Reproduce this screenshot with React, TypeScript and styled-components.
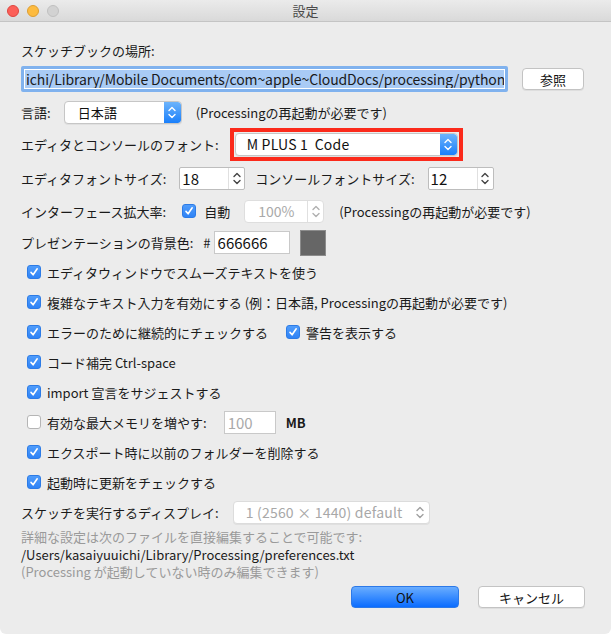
import React from "react";
import styled, { createGlobalStyle, css } from "styled-components";

const Global = createGlobalStyle`
  html, body { margin: 0; padding: 0; background: #ffffff; }
  body { font-family: "Noto Sans CJK JP", "Noto Sans", sans-serif; font-size: 13px; color: #1a1a1a; }
  * { box-sizing: border-box; }
`;

const Window = styled.div`
  width: 611px;
  height: 634px;
  background: #ececec;
  border-radius: 0 0 6px 6px;
  overflow: hidden;
  display: flex;
  flex-direction: column;
`;

const TitleBar = styled.div`
  height: 22px;
  flex: none;
  background: linear-gradient(#ebebeb, #d9d9d9);
  border-bottom: 1px solid #c4c4c4;
  display: flex;
  align-items: center;
  position: relative;
  padding-left: 7px;
  gap: 8px;
`;

const Light = styled.span<{ $c: string; $b: string }>`
  width: 12px;
  height: 12px;
  border-radius: 50%;
  background: ${(p) => p.$c};
  border: 0.5px solid ${(p) => p.$b};
`;

const Title = styled.div`
  position: absolute;
  left: 0;
  right: 0;
  top: 0;
  bottom: 0;
  display: flex;
  align-items: center;
  justify-content: center;
  font-size: 13px;
  color: #4a4a4a;
  pointer-events: none;
`;

const Body = styled.div`
  padding: 18px 26px 0 21px;
  display: flex;
  flex-direction: column;
`;

const Row = styled.div<{ $h: number; $indent?: number }>`
  height: ${(p) => p.$h}px;
  display: flex;
  align-items: center;
  padding-left: ${(p) => p.$indent ?? 0}px;
  white-space: nowrap;
`;

const Label = styled.span<{ $ml?: number; $muted?: boolean; $bold?: boolean }>`
  margin-left: ${(p) => p.$ml ?? 0}px;
  color: ${(p) => (p.$muted ? "#9a9a9a" : "#1a1a1a")};
  font-weight: ${(p) => (p.$bold ? 600 : 400)};
  flex: none;
`;

const PathField = styled.div`
  width: 487px;
  flex: none;
  height: 26px;
  border: 3px solid #80b2ee;
  border-radius: 2px;
  background: #ffffff;
  padding: 1px;
  margin-right: 14px;
`;

const PathSel = styled.div`
  height: 100%;
  background: #a9cbf5;
  font-size: 14px;
  line-height: 18px;
  padding-left: 1px;
  overflow: hidden;
  white-space: nowrap;
  letter-spacing: -0.12px;
`;

const PushButton = styled.div<{ $w: number; $primary?: boolean; $ml?: number }>`
  width: ${(p) => p.$w}px;
  flex: none;
  height: 22px;
  margin-left: ${(p) => p.$ml ?? 0}px;
  border-radius: 4px;
  display: flex;
  align-items: center;
  justify-content: center;
  font-size: 13px;
  color: #111;
  ${(p) =>
    p.$primary
      ? css`
          background: linear-gradient(#69adff, #0a6cff);
          border: 1px solid #2c79e8;
        `
      : css`
          background: #ffffff;
          border: 1px solid #c3c3c3;
          box-shadow: 0 1px 0 rgba(0, 0, 0, 0.06);
        `}
`;

const Select = styled.div<{ $w: number; $ml?: number; $disabled?: boolean }>`
  width: ${(p) => p.$w}px;
  flex: none;
  height: 23px;
  margin-left: ${(p) => p.$ml ?? 0}px;
  background: #ffffff;
  border: 1px solid ${(p) => (p.$disabled ? "#dcdcdc" : "#c6c6c6")};
  border-radius: 4px;
  display: flex;
  align-items: center;
  overflow: hidden;
  color: ${(p) => (p.$disabled ? "#a8a8a8" : "#111")};
  box-shadow: 0 1px 0 rgba(0, 0, 0, 0.05);
`;

const SelectText = styled.span<{ $pl: number; $size?: number }>`
  flex: 1;
  padding-left: ${(p) => p.$pl}px;
  font-size: ${(p) => p.$size ?? 13}px;
  letter-spacing: 0.2px;
`;

const BlueArrow = styled.div`
  width: 17px;
  height: 100%;
  background: linear-gradient(#6db4fb, #1a7ffb);
  display: flex;
  align-items: center;
  justify-content: center;
  border-radius: 0 3px 3px 0;
`;

const PlainArrow = styled.div`
  width: 18px;
  height: 100%;
  display: flex;
  align-items: center;
  justify-content: center;
`;

const Highlight = styled.div`
  margin-left: 11px;
  border: 4px solid #fb2a1b;
  padding: 1px;
  display: flex;
  flex: none;
`;

const Spinner = styled.div<{ $w: number; $ml?: number; $disabled?: boolean }>`
  width: ${(p) => p.$w}px;
  flex: none;
  height: 23px;
  margin-left: ${(p) => p.$ml ?? 0}px;
  background: #ffffff;
  border: 1px solid ${(p) => (p.$disabled ? "#dedede" : "#bdbdbd")};
  border-radius: ${(p) => (p.$disabled ? 4 : 2)}px;
  display: flex;
  align-items: center;
  color: ${(p) => (p.$disabled ? "#a9a9a9" : "#111")};
`;

const SpinText = styled.span<{ $pl: number; $size?: number }>`
  flex: 1;
  padding-left: ${(p) => p.$pl}px;
  font-size: ${(p) => p.$size ?? 15}px;
`;

const SpinArrows = styled.div`
  width: 16px;
  height: 21px;
  border-left: 1px solid #e0e0e0;
  display: flex;
  align-items: center;
  justify-content: center;
`;

const Box = styled.span<{ $checked: boolean; $ml?: number }>`
  width: 14px;
  height: 14px;
  flex: none;
  margin-left: ${(p) => p.$ml ?? 0}px;
  border-radius: 3px;
  display: inline-flex;
  align-items: center;
  justify-content: center;
  ${(p) =>
    p.$checked
      ? css`
          background: linear-gradient(#4f9cfb, #2f83f6);
          border: 1px solid #2c7be6;
        `
      : css`
          background: #ffffff;
          border: 1px solid #b5b5b5;
        `}
`;

const TextField = styled.div<{ $w: number; $ml?: number; $muted?: boolean }>`
  width: ${(p) => p.$w}px;
  flex: none;
  height: 23px;
  margin-left: ${(p) => p.$ml ?? 0}px;
  background: #ffffff;
  border: 1px solid #c9c9c9;
  display: flex;
  align-items: center;
  padding-left: 3px;
  font-size: 15px;
  color: ${(p) => (p.$muted ? "#a9a9a9" : "#111")};
`;

const Swatch = styled.div`
  width: 26px;
  height: 26px;
  flex: none;
  margin-left: 10px;
  background: #666666;
  border: 1px solid #8c8c8c;
`;

const InfoBlock = styled.div`
  margin-top: 1px;
  display: flex;
  flex-direction: column;
  line-height: 17.5px;
  white-space: nowrap;
`;

const Buttons = styled.div`
  margin-top: 5.5px;
  display: flex;
  justify-content: flex-end;
  gap: 19px;
`;

const Chevrons = ({ color }: { color: string }) => (
  <svg width="8" height="13" viewBox="0 0 8 13">
    <path d="M1 4.5 L4 1.5 L7 4.5" fill="none" stroke={color} strokeWidth="1.4" strokeLinecap="round" strokeLinejoin="round" />
    <path d="M1 8.5 L4 11.5 L7 8.5" fill="none" stroke={color} strokeWidth="1.4" strokeLinecap="round" strokeLinejoin="round" />
  </svg>
);

const Check = () => (
  <svg width="10" height="10" viewBox="0 0 10 10">
    <path d="M2 5.4 L4.1 7.8 L8.2 1.8" fill="none" stroke="#fff" strokeWidth="1.6" strokeLinecap="round" strokeLinejoin="round" />
  </svg>
);

const CheckRow = ({ checked, children }: { checked: boolean; children: React.ReactNode }) => (
  <Row $h={30} $indent={6}>
    <Box $checked={checked}>{checked && <Check />}</Box>
    {children}
  </Row>
);

export default function App() {
  return (
    <>
      <Global />
      <Window>
        <TitleBar>
          <Light $c="#fc5f58" $b="#de4640" />
          <Light $c="#fdbb3f" $b="#dd9e32" />
          <Light $c="#d2d2d2" $b="#c0c0c0" />
          <Title>設定</Title>
        </TitleBar>
        <Body>
          <Row $h={20}>
            <Label>スケッチブックの場所:</Label>
          </Row>
          <Row $h={38}>
            <PathField>
              <PathSel>ichi/Library/Mobile Documents/com~apple~CloudDocs/processing/python</PathSel>
            </PathField>
            <PushButton $w={62}>参照</PushButton>
          </Row>
          <Row $h={28}>
            <Label>言語:</Label>
            <Select $w={118} $ml={13}>
              <SelectText $pl={13}>日本語</SelectText>
              <BlueArrow>
                <Chevrons color="#ffffff" />
              </BlueArrow>
            </Select>
            <Label $ml={14}>(Processingの再起動が必要です)</Label>
          </Row>
          <Row $h={36}>
            <Label>エディタとコンソールのフォント:</Label>
            <Highlight>
              <Select $w={223}>
                <SelectText $pl={11} $size={14}>M PLUS 1&nbsp;&nbsp;Code</SelectText>
                <BlueArrow>
                  <Chevrons color="#ffffff" />
                </BlueArrow>
              </Select>
            </Highlight>
          </Row>
          <Row $h={32}>
            <Label>エディタフォントサイズ:</Label>
            <Spinner $w={66} $ml={13}>
              <SpinText $pl={2}>18</SpinText>
              <SpinArrows>
                <Chevrons color="#444444" />
              </SpinArrows>
            </Spinner>
            <Label $ml={10}>コンソールフォントサイズ:</Label>
            <Spinner $w={66} $ml={13}>
              <SpinText $pl={2}>12</SpinText>
              <SpinArrows>
                <Chevrons color="#444444" />
              </SpinArrows>
            </Spinner>
          </Row>
          <Row $h={34}>
            <Label>インターフェース拡大率:</Label>
            <Box $checked $ml={16}>
              <Check />
            </Box>
            <Label $ml={8}>自動</Label>
            <Spinner $w={80} $ml={14} $disabled>
              <SpinText $pl={13} $size={14}>100%</SpinText>
              <SpinArrows>
                <Chevrons color="#b0b0b0" />
              </SpinArrows>
            </Spinner>
            <Label $ml={15}>(Processingの再起動が必要です)</Label>
          </Row>
          <Row $h={29}>
            <Label>プレゼンテーションの背景色:</Label>
            <Label $ml={10}>#</Label>
            <TextField $w={76} $ml={3}>666666</TextField>
            <Swatch />
          </Row>
          <CheckRow checked>
            <Label $ml={6}>エディタウィンドウでスムーズテキストを使う</Label>
          </CheckRow>
          <CheckRow checked>
            <Label $ml={6}>複雑なテキスト入力を有効にする (例：日本語, Processingの再起動が必要です)</Label>
          </CheckRow>
          <CheckRow checked>
            <Label $ml={6}>エラーのために継続的にチェックする</Label>
            <Box $checked $ml={18}>
              <Check />
            </Box>
            <Label $ml={6}>警告を表示する</Label>
          </CheckRow>
          <CheckRow checked>
            <Label $ml={6}>コード補完 Ctrl-space</Label>
          </CheckRow>
          <CheckRow checked>
            <Label $ml={6}>import 宣言をサジェストする</Label>
          </CheckRow>
          <CheckRow checked={false}>
            <Label $ml={6}>有効な最大メモリを増やす:</Label>
            <TextField $w={52} $ml={17} $muted>
              100
            </TextField>
            <Label $ml={10} $bold>
              MB
            </Label>
          </CheckRow>
          <CheckRow checked>
            <Label $ml={6}>エクスポート時に以前のフォルダーを削除する</Label>
          </CheckRow>
          <CheckRow checked>
            <Label $ml={6}>起動時に更新をチェックする</Label>
          </CheckRow>
          <Row $h={30}>
            <Label>スケッチを実行するディスプレイ:</Label>
            <Select $w={197} $ml={14} $disabled>
              <SelectText $pl={12} $size={14}>1 (2560 × 1440) default</SelectText>
              <PlainArrow>
                <Chevrons color="#a0a0a0" />
              </PlainArrow>
            </Select>
          </Row>
          <InfoBlock>
            <Label $muted>詳細な設定は次のファイルを直接編集することで可能です:</Label>
            <Label>/Users/kasaiyuuichi/Library/Processing/preferences.txt</Label>
            <Label $muted>(Processing が起動していない時のみ編集できます)</Label>
          </InfoBlock>
          <Buttons>
            <PushButton $w={108} $primary>
              OK
            </PushButton>
            <PushButton $w={107}>キャンセル</PushButton>
          </Buttons>
        </Body>
      </Window>
    </>
  );
}
